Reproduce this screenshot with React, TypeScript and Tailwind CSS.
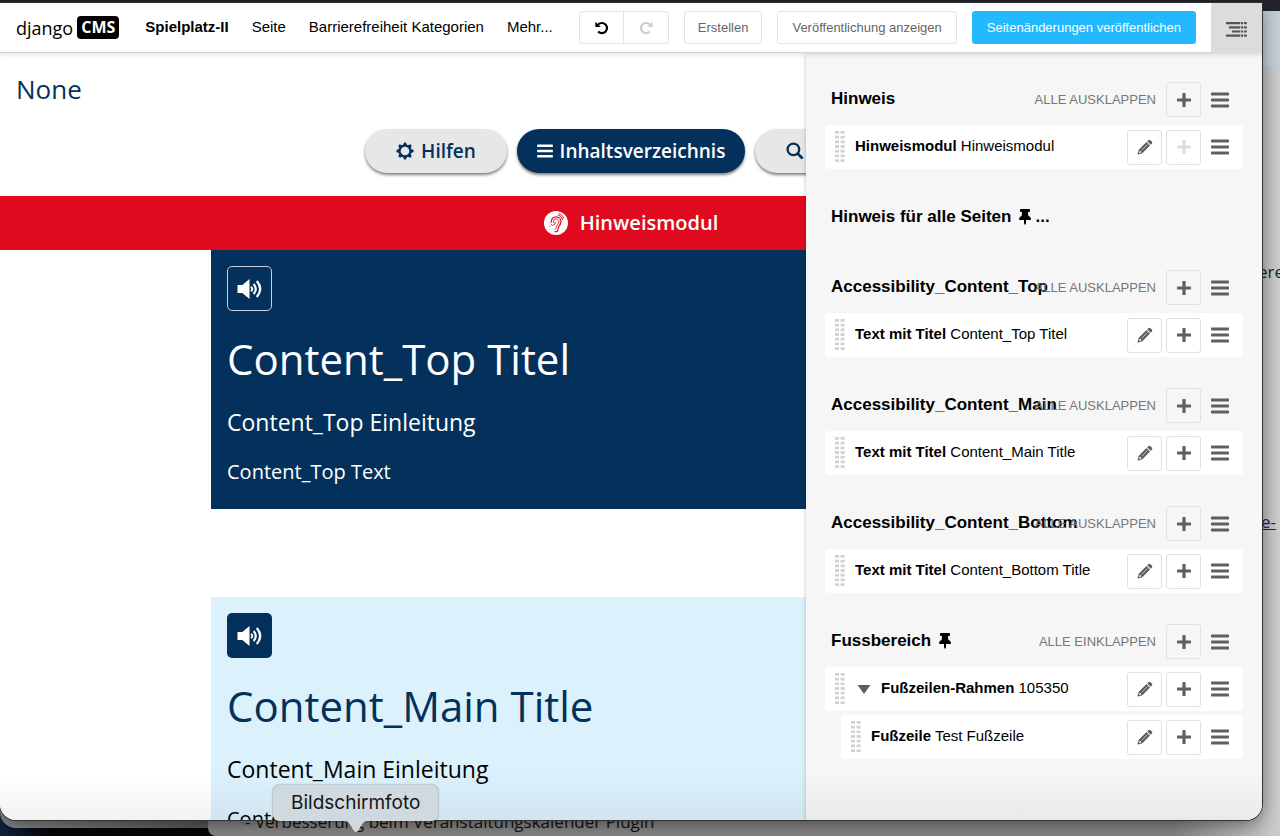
import React from 'react';
import { FaThumbtack } from 'react-icons/fa';

type Plugin = {
  type: string;
  name: string;
  canAdd?: boolean;
  expanded?: boolean;
  children?: Plugin[];
};

type Placeholder = {
  title: string;
  pinned?: boolean;
  truncated?: boolean;
  toggleLabel?: string;
  plugins: Plugin[];
};

const placeholders: Placeholder[] = [
  {
    title: 'Hinweis',
    toggleLabel: 'Alle ausklappen',
    plugins: [{ type: 'Hinweismodul', name: 'Hinweismodul', canAdd: false }],
  },
  { title: 'Hinweis für alle Seiten', pinned: true, truncated: true, plugins: [] },
  {
    title: 'Accessibility_Content_Top',
    toggleLabel: 'Alle ausklappen',
    plugins: [{ type: 'Text mit Titel', name: 'Content_Top Titel' }],
  },
  {
    title: 'Accessibility_Content_Main',
    toggleLabel: 'Alle ausklappen',
    plugins: [{ type: 'Text mit Titel', name: 'Content_Main Title' }],
  },
  {
    title: 'Accessibility_Content_Bottom',
    toggleLabel: 'Alle ausklappen',
    plugins: [{ type: 'Text mit Titel', name: 'Content_Bottom Title' }],
  },
  {
    title: 'Fussbereich',
    pinned: true,
    toggleLabel: 'Alle einklappen',
    plugins: [
      {
        type: 'Fußzeilen-Rahmen',
        name: '105350',
        expanded: true,
        children: [{ type: 'Fußzeile', name: 'Test Fußzeile' }],
      },
    ],
  },
];

/* ---------- Icons ---------- */

function UndoIcon({ className }: { className?: string }) {
  return (
    <svg viewBox="0 0 14 14" className={className} fill="none" aria-hidden="true">
      <path d="M3.2 3.6A5.1 5.1 0 1 1 3.2 10.6" stroke="currentColor" strokeWidth="2.2" />
      <path d="M0.4 0.8V6h5.4z" fill="currentColor" />
    </svg>
  );
}

function BarsIcon({ className = 'w-[18px] h-4' }: { className?: string }) {
  return (
    <svg viewBox="0 0 18 16" className={className} fill="currentColor" aria-hidden="true">
      <rect y="0.5" width="18" height="3" rx="0.7" />
      <rect y="6.5" width="18" height="3" rx="0.7" />
      <rect y="12.5" width="18" height="3" rx="0.7" />
    </svg>
  );
}

function PlusIcon() {
  return (
    <svg viewBox="0 0 14 14" className="w-3.5 h-3.5" fill="currentColor" aria-hidden="true">
      <path d="M5.4 0.6q0-.6.6-.6h2q.6 0 .6.6v4.8h4.8q.6 0 .6.6v2q0 .6-.6.6H8.6v4.8q0 .6-.6.6H6q-.6 0-.6-.6V8.6H.6q-.6 0-.6-.6V6q0-.6.6-.6h4.8z" />
    </svg>
  );
}

function PencilIcon() {
  return (
    <svg viewBox="0 0 16 16" className="w-4 h-4" fill="currentColor" aria-hidden="true">
      <path d="M11.3 1.2q1.1-1.1 2.2 0l1.3 1.3q1.1 1.1 0 2.200l-1.100 1.100-3.500-3.500z" />
      <path fillRule="evenodd" d="M9.500 3l3.500 3.500-7.600 7.700-4.200 1.200q-.8.2-.6-.6l1.200-4.100zM2.600 11.900l-.7 2.200 2.300-.6-.1-1.300z" />
      <path d="M4.700 11.300l5.800-5.800" stroke="#fff" strokeWidth="0.600" />
    </svg>
  );
}

function EarIcon() {
  return (
    <svg viewBox="0 0 24 24" className="w-6 h-6" fill="none" stroke="currentColor" strokeLinecap="round" aria-hidden="true">
      <path d="M7.2 11.2c0-3.4 2.2-5.4 5-5.4s4.8 2 4.8 4.7c0 3.6-2.7 4.4-2.8 7-.1 2-1.3 3.5-3.3 3.2" strokeWidth="1.2" />
      <path d="M9.3 11.4c.1-2.2 1.200-3.500 2.900-3.500s2.700 1.200 2.700 2.800c0 2.300-1.900 3-2.200 4.700-.2 1.600-.4 2.600-1.800 2.700" strokeWidth="0.900" />
      <path d="M9.600 13.800c1.400-.2 2.200-1.200 1.600-2.500M7 13.200l1.500 1.500M5.600 15.300l.2.200" strokeWidth="0.900" />
      <path d="M14.200 4.300c2.300.4 3.800 1.900 4.300 4M15.200 2.800c2 .6 3.700 2.100 4.300 4.100" strokeWidth="1" />
    </svg>
  );
}

function StructureIcon() {
  return (
    <svg viewBox="0 0 21 15" className="w-[21px] h-[15px]" fill="currentColor" aria-hidden="true">
      <path d="M0 0h14v2.2H0zM3 4.2h11v2.2H3zM6 8.4h8v2.2H6zM0 12.6h14v2.2H0z" />
      <path d="M14.7 0h2.5v2.2h-2.5zM14.7 4.2h2.5v2.2h-2.5zM14.7 8.4h2.5v2.2h-2.5zM14.7 12.6h2.5v2.2h-2.5z" />
      <path d="M18 0h2.8v2.2h-2.8zM18 4.2h2.8v2.2h-2.8zM18 8.4h2.8v2.2h-2.8zM18 12.6h2.8v2.2h-2.8z" />
    </svg>
  );
}

function GearIcon() {
  return (
    <svg viewBox="0 0 18 18" className="w-[18px] h-[18px]" aria-hidden="true">
      <g fill="currentColor">
        {[0, 45, 90, 135, 180, 225, 270, 315].map((angle) => (
          <path key={angle} d="M6.6 3.6L8.1 0.5h1.8l1.5 3.1z" transform={`rotate(${angle} 9 9)`} />
        ))}
      </g>
      <circle cx="9" cy="9" r="5.4" fill="none" stroke="currentColor" strokeWidth="2.1" />
    </svg>
  );
}

function SearchIcon() {
  return (
    <svg viewBox="0 0 18 18" className="w-[18px] h-[18px]" fill="none" stroke="currentColor" aria-hidden="true">
      <circle cx="7.4" cy="7.4" r="5.8" strokeWidth="2.3" />
      <path d="M11.6 11.6l5 5" strokeWidth="2.8" />
    </svg>
  );
}

function SpeakerIcon() {
  return (
    <svg viewBox="0 0 26 20" className="w-[26px] h-5" fill="none" stroke="currentColor" aria-hidden="true">
      <path d="M0.5 6h4.8L12.5 0v20l-7.2-6H0.5z" fill="currentColor" stroke="none" />
      <path d="M14 7.8q2.6 2.2 0 4.4" strokeWidth="2" />
      <path d="M16.6 5q4.4 5 0 10" strokeWidth="2.1" />
      <path d="M19.8 2q6.8 8 0 16" strokeWidth="2.3" />
    </svg>
  );
}

function DragHandle() {
  return (
    <svg viewBox="0 0 10 32" className="w-2.5 h-8 shrink-0 text-[#d2d2d2]" fill="currentColor" aria-hidden="true">
      {[0, 1, 2, 3, 4, 5, 6].map((row) => (
        <path key={row} d="M0 0h4v2.8H0zM5.6 0h4v2.8h-4z" transform={`translate(0 ${row * 4.7})`} />
      ))}
    </svg>
  );
}

/* ---------- Toolbar ---------- */

function Toolbar() {
  return (
    <header className="relative z-20 flex h-[50px] shrink-0 items-center border-b border-[#d4d4d4] bg-white pl-4 shadow-[0_1px_5px_rgba(0,0,0,0.15)]">
      <a href="#home" className="flex items-center gap-1 font-['Open_Sans',sans-serif] text-black" aria-label="django CMS">
        <span className="text-[18px] leading-6">django</span>
        <span className="rounded-[4px] bg-black px-1 text-[16px] font-bold leading-[23px] text-white">CMS</span>
      </a>
      <nav className="ml-[26px] flex items-center gap-[23px] whitespace-nowrap text-[15px] text-black">
        <a href="#site" className="font-bold">Spielplatz-II</a>
        <a href="#seite">Seite</a>
        <a href="#kategorien">Barrierefreiheit Kategorien</a>
        <a href="#mehr">Mehr...</a>
      </nav>
      <div className="ml-auto flex items-center gap-[15px] whitespace-nowrap text-[13px] text-[#666]">
        <div className="flex h-[33px] w-[90px] rounded-[3px] border border-[#e3e3e3]">
          <button type="button" aria-label="Rückgängig" className="flex flex-1 items-center justify-center border-r border-[#e3e3e3] text-black">
            <UndoIcon className="w-3.5 h-3.5" />
          </button>
          <button type="button" aria-label="Wiederholen" className="flex flex-1 items-center justify-center text-[#ccc]">
            <UndoIcon className="w-3.5 h-3.5 -scale-x-100" />
          </button>
        </div>
        <button type="button" className="h-[33px] rounded-[3px] border border-[#e3e3e3] px-[13px]">Erstellen</button>
        <button type="button" className="h-[33px] rounded-[3px] border border-[#e3e3e3] px-3.5">Veröffentlichung anzeigen</button>
        <button type="button" className="h-[33px] rounded-[3px] bg-[#22b9ff] px-[15px] text-white">Seitenänderungen veröffentlichen</button>
        <button type="button" aria-label="Struktur" className="flex h-[50px] w-[51px] items-center justify-center self-start bg-[#dcdcdc] pt-1 text-[#555]">
          <StructureIcon />
        </button>
      </div>
    </header>
  );
}

/* ---------- Page ---------- */

function ReadAloudButton({ outlined }: { outlined?: boolean }) {
  return (
    <button
      type="button"
      aria-label="Vorlesen"
      className={`flex h-[45px] w-[45px] items-center justify-center rounded-[5px] text-white ${outlined ? 'border border-[#c5d0db]' : 'bg-[#04315b]'}`}
    >
      <SpeakerIcon />
    </button>
  );
}

function PageContent() {
  return (
    <main className="min-w-0 flex-1 overflow-hidden bg-white font-['Open_Sans','Noto_Sans',sans-serif]">
      <p className="px-4 pt-[18px] text-[26px] leading-9 text-[#04315b]">None</p>

      <div className="mt-[22px] flex justify-center gap-2.5 text-[19px] font-semibold text-[#04315b]">
        <button type="button" className="flex h-11 w-[142px] items-center justify-center gap-[7px] rounded-full bg-[#e7e7e7] shadow-[0_2px_3px_rgba(0,0,0,0.5)]">
          <GearIcon /> Hilfen
        </button>
        <button type="button" className="flex h-11 w-[228px] items-center justify-center gap-[7px] rounded-full bg-[#04315b] text-white shadow-[0_2px_3px_rgba(0,0,0,0.5)]">
          <BarsIcon className="w-4 h-3.5" /> Inhaltsverzeichnis
        </button>
        <button type="button" className="flex h-11 w-[142px] items-center justify-center gap-[7px] rounded-full bg-[#e7e7e7] shadow-[0_2px_3px_rgba(0,0,0,0.5)]">
          <SearchIcon /> Suche
        </button>
      </div>

      <div className="mt-[23px] flex h-[54px] items-center justify-center gap-3 bg-[#e00a1e] text-[20px] font-semibold text-white">
        <span className="flex h-6 w-6 items-center justify-center rounded-full bg-white text-[#e00a1e]">
          <EarIcon />
        </span>
        Hinweismodul
      </div>

      <section className="mx-auto h-[259px] max-w-[840px] bg-[#04315b] px-4 pt-4 text-white">
        <ReadAloudButton outlined />
        <h1 className="mt-5 text-[42px] leading-[56px]">Content_Top Titel</h1>
        <p className="mt-[19px] text-[23px] leading-8">Content_Top Einleitung</p>
        <p className="mt-5 text-[20px] leading-7">Content_Top Text</p>
      </section>

      <section className="mx-auto mt-[88px] max-w-[840px] bg-[#dbf1fc] px-4 pb-8 pt-4 text-black">
        <ReadAloudButton />
        <h1 className="mt-5 text-[42px] leading-[56px] text-[#04315b]">Content_Main Title</h1>
        <p className="mt-[19px] text-[23px] leading-8">Content_Main Einleitung</p>
        <p className="mt-5 text-[20px] leading-7">Content_Main Text</p>
      </section>
    </main>
  );
}

/* ---------- Structure board ---------- */

function IconButton({ label, disabled, children }: { label: string; disabled?: boolean; children: React.ReactNode }) {
  return (
    <button
      type="button"
      aria-label={label}
      disabled={disabled}
      className="flex h-[35px] w-[35px] shrink-0 items-center justify-center rounded-[3px] border border-[#e1e1e1] disabled:text-[#ddd]"
    >
      {children}
    </button>
  );
}

function MenuButton() {
  return (
    <button type="button" aria-label="Menü" className="ml-1.5 shrink-0">
      <BarsIcon />
    </button>
  );
}

function PluginRow({ plugin }: { plugin: Plugin }) {
  return (
    <li>
      <div className="flex h-11 items-center gap-1 rounded-[4px] bg-white pl-2.5 pr-3.5 text-[#5f5f5f]">
        <DragHandle />
        {plugin.expanded && (
          <button type="button" aria-label="Einklappen" className="ml-2">
            <svg viewBox="0 0 14 9" className="w-3.5 h-[9px]" fill="currentColor" aria-hidden="true">
              <path d="M0.5 0h13L7 9z" />
            </svg>
          </button>
        )}
        <p className="ml-1.5 min-w-0 flex-1 truncate pb-px text-[15px] text-black">
          <strong>{plugin.type}</strong> {plugin.name}
        </p>
        <IconButton label="Bearbeiten">
          <PencilIcon />
        </IconButton>
        <IconButton label="Hinzufügen" disabled={plugin.canAdd === false}>
          <PlusIcon />
        </IconButton>
        <MenuButton />
      </div>
      {plugin.children && (
        <ul className="mt-1 pl-4">
          {plugin.children.map((child) => (
            <PluginRow key={child.name} plugin={child} />
          ))}
        </ul>
      )}
    </li>
  );
}

function PlaceholderSection({ placeholder }: { placeholder: Placeholder }) {
  const { title, pinned, truncated, toggleLabel, plugins } = placeholder;

  return (
    <section className={plugins.length ? 'mb-[31px]' : 'mb-[35px]'}>
      <div className="flex h-[35px] items-center gap-1 pl-1.5 pr-3.5 text-[#5f5f5f]">
        {/* Long titles run underneath the toggle link */}
        <h2 className="flex min-w-0 flex-1 items-center whitespace-nowrap pb-px text-[17px] font-bold text-black">
          {title}
          {pinned && <FaThumbtack className="ml-2 h-4 w-3 shrink-0" />}
          {truncated && <span className="ml-1">...</span>}
        </h2>
        {toggleLabel && (
          <>
            <button type="button" className="mr-1.5 whitespace-nowrap text-[13px] uppercase text-[#777]">
              {toggleLabel}
            </button>
            <IconButton label="Hinzufügen">
              <PlusIcon />
            </IconButton>
            <MenuButton />
          </>
        )}
      </div>
      {plugins.length > 0 && (
        <ul className="mt-2">
          {plugins.map((plugin) => (
            <PluginRow key={plugin.name} plugin={plugin} />
          ))}
        </ul>
      )}
    </section>
  );
}

function StructureBoard() {
  return (
    <aside className="absolute inset-y-0 right-0 z-10 w-[456px] overflow-hidden bg-[#f6f6f6] px-[19px] pt-[29px] shadow-[0_0_4px_rgba(0,0,0,0.25)]">
      {placeholders.map((placeholder) => (
        <PlaceholderSection key={placeholder.title} placeholder={placeholder} />
      ))}
    </aside>
  );
}

/* ---------- Desktop ---------- */

function BackgroundWindows() {
  return (
    <div className="absolute inset-0 bg-[#05060b] font-['Open_Sans','Noto_Sans',sans-serif]">
      <div className="absolute bottom-0 left-0 h-10 w-12 bg-gradient-to-r from-[#10213f] to-[#05060b]" />
      <div className="absolute bottom-2 left-0 h-10 w-64 rounded-bl-2xl bg-gradient-to-r from-[#8a8a8a] to-[#4a4a4a]" />
      <div className="absolute bottom-0 left-52 right-0 top-[11px] overflow-hidden rounded-bl-lg bg-gradient-to-r from-[#868686] from-90% to-[#cdcdcd]">
        <div className="absolute right-0 top-0 h-14 w-5 bg-[#c3ced5]" />
        <p className="absolute -bottom-0.5 left-[37px] whitespace-nowrap text-[17px] leading-8 text-[#111]">
          - Verbesserung beim Veranstaltungskalender Plugin
        </p>
        <p className="absolute -right-1 top-[249px] text-[17px] leading-6 text-[#222]">ere</p>
        <a href="#link" className="absolute right-1 top-[499px] text-[17px] leading-6 text-[#3b1277] underline">
          e-
        </a>
      </div>
      <div className="absolute inset-x-0 top-0 h-[11px] bg-[#25232c]" />
    </div>
  );
}

function DockTooltip() {
  return (
    <div
      role="tooltip"
      className="absolute bottom-[15px] left-[273px] z-30 rounded-md bg-[#d0d9e0] px-[18px] py-1 font-['Inter',sans-serif] text-[19px] leading-7 text-[#151515] shadow-[0_0_2px_rgba(0,0,0,0.5)]"
    >
      Bildschirmfoto
      <svg viewBox="0 0 22 12" className="absolute left-1/2 top-full h-3 w-[22px] -translate-x-1/2 text-[#d0d9e0]" fill="currentColor" aria-hidden="true">
        <path d="M0 0h22c-3 0-5 3-8 8.5q-3 5-6 0C5 3 3 0 0 0z" />
      </svg>
    </div>
  );
}

export default function App() {
  return (
    <div className="relative h-screen overflow-hidden font-['Liberation_Sans',Arial,sans-serif]">
      <BackgroundWindows />
      <div className="absolute bottom-4 left-0 right-[18px] top-[3px] flex flex-col overflow-hidden rounded-b-2xl bg-white shadow-[0_0_0_1px_#333,0_4px_18px_rgba(0,0,0,0.45)]">
        <Toolbar />
        <div className="relative flex min-h-0 flex-1">
          <PageContent />
          <StructureBoard />
        </div>
        <div className="pointer-events-none absolute inset-x-0 bottom-0 z-20 h-12 bg-gradient-to-b from-transparent to-black/5" />
      </div>
      <DockTooltip />
    </div>
  );
}
